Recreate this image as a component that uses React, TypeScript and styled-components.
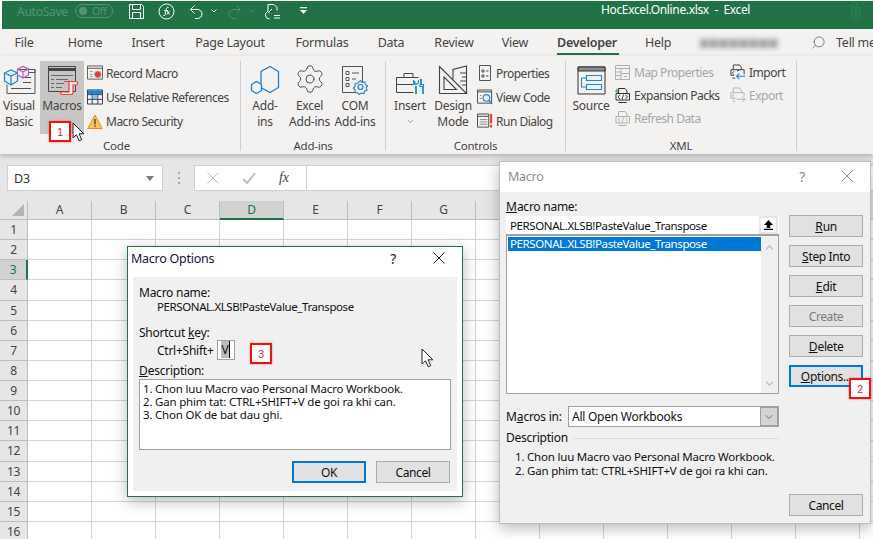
import React from 'react';
import styled, { createGlobalStyle } from 'styled-components';
import { ChevronDown, ChevronUp, Search, Settings } from 'lucide-react';

const FONT = `'Noto Sans', 'Open Sans', 'Liberation Sans', sans-serif`;
const GREEN = '#217346';

const Global = createGlobalStyle`
  html, body { margin: 0; padding: 0; background: #fff; }
  body { font-family: ${FONT}; font-size: 12px; letter-spacing: -0.25px; color: #333; }
  u { letter-spacing: 0; }
  * { box-sizing: border-box; }
`;

const Page = styled.div`
  position: relative;
  width: 873px;
  height: 539px;
  overflow: hidden;
  display: flex;
  flex-direction: column;
  background: #fff;
`;

/* title bar */
const TitleBar = styled.div`
  position: relative;
  flex: 0 0 27px;
  margin: 1px 0 0 2px;
  display: flex;
  align-items: center;
  background: ${GREEN};
  color: #fff;
  padding-bottom: 8px;
`;
const AutoSave = styled.span`
  margin-left: 15px;
  font-size: 12px;
  color: #56946f;
`;
const Toggle = styled.span`
  margin-left: 7px;
  width: 38px;
  height: 14px;
  border: 1px solid #56946f;
  border-radius: 7px;
  display: flex;
  align-items: center;
  gap: 5px;
  padding-left: 3px;
  font-size: 10.5px;
  color: #56946f;
  &::before {
    content: '';
    width: 8px;
    height: 8px;
    border-radius: 50%;
    background: #56946f;
  }
`;
const Qat = styled.span<{ $x: number }>`
  display: flex;
  margin-left: ${p => p.$x}px;
`;
const DocTitle = styled.span`
  position: absolute;
  left: 599px;
  top: 0;
  font-size: 12px;
  letter-spacing: -0.35px;
  white-space: pre;
`;

/* tabs */
const TabRow = styled.div`
  flex: 0 0 27px;
  display: flex;
  align-items: stretch;
  background: #f3f2f1;
`;
const Tab = styled.div<{ $w: number; $active?: boolean }>`
  position: relative;
  flex: none;
  width: ${p => p.$w}px;
  display: flex;
  align-items: center;
  justify-content: center;
  font-size: 12.5px;
  padding-bottom: 1px;
  color: #444;
  font-weight: ${p => (p.$active ? 600 : 400)};
  &::after {
    content: '';
    display: ${p => (p.$active ? 'block' : 'none')};
    position: absolute;
    left: 11px;
    right: 9px;
    bottom: 1px;
    height: 2px;
    background: ${GREEN};
  }
`;
const Blurred = styled.div`
  flex: none;
  width: 78px;
  height: 9px;
  margin: 10px 33px 0 12px;
  background: repeating-linear-gradient(90deg, #a2a2a2 0 7px, #c4c4c4 7px 10px);
  filter: blur(2.5px);
`;
const TellMe = styled.div`
  flex: none;
  display: flex;
  align-items: center;
  gap: 10px;
  padding-bottom: 1px;
  font-size: 12.5px;
  white-space: nowrap;
  color: #444;
`;

/* ribbon */
const Ribbon = styled.div`
  position: relative;
  z-index: 1;
  flex: 0 0 98px;
  display: flex;
  padding-top: 5px;
  background: #f3f2f1;
  box-shadow: 0 2px 5px rgba(0, 0, 0, 0.22);
`;
const Group = styled.div<{ $w: number; $pad: number }>`
  width: ${p => p.$w}px;
  height: 90px;
  padding-left: ${p => p.$pad}px;
  border-right: 1px solid #d0cfce;
  display: flex;
  flex-direction: column;
  justify-content: space-between;
  align-items: stretch;
`;
const GroupBody = styled.div`
  display: flex;
  height: 73px;
`;
const GroupLabel = styled.div<{ $shift?: number }>`
  text-align: center;
  height: 14px;
  line-height: 14px;
  font-size: 11.5px;
  color: #444;
  margin: 0 0 -2px ${p => -(p.$shift ?? 0)}px;
`;
const LargeBtn = styled.div<{ $w: number; $gap?: number; $hot?: boolean }>`
  width: ${p => p.$w}px;
  margin-right: ${p => p.$gap ?? 0}px;
  background: ${p => (p.$hot ? '#c8c6c4' : 'transparent')};
  text-align: center;
  line-height: 16px;
  color: #444;
  font-size: 12px;
  flex: none;
`;
const LargeIcon = styled.div`
  height: 37px;
  display: flex;
  align-items: flex-end;
  justify-content: center;
  padding-bottom: 3px;
`;
const SmallCol = styled.div<{ $w?: number; $step: number; $top: number }>`
  width: ${p => (p.$w ? `${p.$w}px` : 'auto')};
  flex: none;
  padding-top: ${p => p.$top}px;
  display: flex;
  flex-direction: column;
  & > div { height: ${p => p.$step}px; }
`;
const SmallBtn = styled.div<{ $off?: boolean }>`
  display: flex;
  align-items: center;
  gap: 3px;
  white-space: nowrap;
  font-size: 12px;
  letter-spacing: -0.5px;
  color: ${p => (p.$off ? '#a6a6a6' : '#444')};
`;
const IconSlot = styled.span`
  width: 16px;
  height: 17px;
  display: flex;
  align-items: center;
  justify-content: center;
  flex: none;
`;

/* formula bar */
const FormulaBar = styled.div`
  flex: 0 0 47px;
  background: #e6e6e6;
  display: flex;
  align-items: flex-start;
  padding: 11px 0 0 7px;
`;
const NameBox = styled.div`
  width: 156px;
  height: 26px;
  background: #fff;
  border: 1px solid #d0d0d0;
  display: flex;
  align-items: center;
  justify-content: space-between;
  padding: 0 8px 0 6px;
  font-size: 12.5px;
  color: #333;
  &::after {
    content: '';
    border: 4px solid transparent;
    border-top: 5px solid #7a7a7a;
    border-bottom: 0;
  }
`;
const Grip = styled.div`
  width: 2px;
  height: 12px;
  margin: 7px 14px 0 15px;
  background: repeating-linear-gradient(180deg, #a6a6a6 0 2px, transparent 2px 5px);
`;
const FormulaBox = styled.div`
  flex: 1;
  height: 26px;
  background: #fff;
  border: 1px solid #d0d0d0;
  border-right: 0;
  display: flex;
  align-items: center;
`;
const FxZone = styled.div`
  width: 112px;
  height: 100%;
  border-right: 1px solid #d0d0d0;
  display: flex;
  align-items: center;
  gap: 23px;
  padding-left: 12px;
`;
const FxText = styled.span`
  font-family: 'Liberation Serif', serif;
  font-style: italic;
  font-size: 14px;
  color: #444;
`;

/* sheet grid */
const Sheet = styled.div`
  flex: 1;
  display: grid;
  grid-template-columns: 28px repeat(14, 64px);
  grid-auto-rows: 20.13px;
  grid-template-rows: 19px;
  overflow: hidden;
`;
const Corner = styled.div`
  background: #e6e6e6;
  border-right: 1px solid #bdbdbd;
  border-bottom: 1px solid #bdbdbd;
  position: relative;
  &::after {
    content: '';
    position: absolute;
    right: 3px;
    bottom: 3px;
    border-style: solid;
    border-width: 0 0 12px 12px;
    border-color: transparent transparent #b4b4b4 transparent;
  }
`;
const ColHead = styled.div<{ $on: boolean }>`
  background: ${p => (p.$on ? '#d2d2d2' : '#e6e6e6')};
  color: ${p => (p.$on ? GREEN : '#444')};
  border-right: 1px solid #bdbdbd;
  border-bottom: ${p => (p.$on ? `2px solid ${GREEN}` : '1px solid #bdbdbd')};
  text-align: center;
  line-height: 18px;
  font-size: 12px;
`;
const RowHead = styled.div<{ $on: boolean }>`
  background: ${p => (p.$on ? '#d2d2d2' : '#e6e6e6')};
  color: ${p => (p.$on ? GREEN : '#444')};
  border-right: ${p => (p.$on ? `2px solid ${GREEN}` : '1px solid #bdbdbd')};
  border-bottom: 1px solid #bdbdbd;
  text-align: center;
  line-height: 20px;
  font-size: 12px;
`;
const Cell = styled.div`
  border-right: 1px solid #d4d4d4;
  border-bottom: 1px solid #d4d4d4;
`;

/* dialogs: windows over the sheet */
const Win = styled.div<{ $x: number; $y: number; $w: number; $h: number; $border: string }>`
  position: absolute;
  z-index: 3;
  left: ${p => p.$x}px;
  top: ${p => p.$y}px;
  width: ${p => p.$w}px;
  height: ${p => p.$h}px;
  border: 1px solid ${p => p.$border};
  background: #fff;
  display: flex;
  flex-direction: column;
  color: #111;
  box-shadow: 0 4px 14px rgba(0, 0, 0, 0.28);
`;
const WinHead = styled.div<{ $h: number; $lift: number; $dim?: boolean }>`
  flex: 0 0 ${p => p.$h}px;
  display: flex;
  align-items: center;
  padding: 0 0 ${p => p.$lift}px 3px;
  font-size: 12.5px;
  color: ${p => (p.$dim ? '#8c8c8c' : '#1a1040')};
`;
const WinName = styled.span<{ $pad: number }>`
  flex: 1;
  padding-left: ${p => p.$pad}px;
`;
const HelpMark = styled.span<{ $gap: number }>`
  margin-right: ${p => p.$gap}px;
  font-size: 14px;
`;
const CloseSlot = styled.span<{ $gap: number }>`
  display: flex;
  margin-right: ${p => p.$gap}px;
`;

const OptBody = styled.div`
  flex: 1;
  margin: 0 5px 5px;
  padding: 8px 6px 8px;
  background: #f0f0f0;
  font-size: 12px;
  display: flex;
  flex-direction: column;
`;
const Label = styled.div<{ $top?: number }>`
  margin-top: ${p => p.$top ?? 0}px;
  line-height: 16px;
  white-space: nowrap;
`;
const MacroText = styled.span`
  font-size: 11.5px;
  letter-spacing: -0.4px;
  white-space: nowrap;
`;
const Indented = styled.div<{ $top?: number }>`
  margin: ${p => p.$top ?? 0}px 0 0 18px;
  line-height: 16px;
  white-space: nowrap;
`;
const KeyRow = styled.div`
  display: flex;
  align-items: center;
  margin: -1px 0 0 18px;
  height: 20px;
`;
const KeyInput = styled.div`
  width: 18px;
  height: 20px;
  margin-left: 3px;
  background: #fff;
  border: 1px solid #a0a0a0;
  padding: 1px 0 0 3px;
  line-height: 16px;
  & > span { background: #bdbdbd; padding: 0 1px 0 1px; border-right: 1px solid #000; }
`;
const DescBox = styled.div`
  height: 71px;
  background: #fff;
  border: 1px solid #a0a0a0;
  padding: 2px 3px;
  line-height: 13px;
  font-size: 11.5px;
  letter-spacing: -0.2px;
  white-space: pre;
`;
const ButtonRow = styled.div`
  display: flex;
  justify-content: flex-end;
  gap: 10px;
  margin: 11px 1px 0 0;
`;
const Btn = styled.div<{ $focus?: boolean; $off?: boolean }>`
  width: 74px;
  height: 22px;
  flex: none;
  display: flex;
  align-items: center;
  justify-content: center;
  background: #e1e1e1;
  border: ${p => (p.$focus ? '2px solid #0078d7' : '1px solid #adadad')};
  color: ${p => (p.$off ? '#7a7a7a' : '#111')};
  font-size: 12px;
  letter-spacing: -0.4px;
`;

const MacroBody = styled.div`
  flex: 1;
  background: #f0f0f0;
  display: grid;
  grid-template-columns: 273px 74px;
  column-gap: 10px;
  padding: 7px 0 7px 6px;
  font-size: 12px;
`;
const LeftCol = styled.div`
  display: flex;
  flex-direction: column;
`;
const RightCol = styled.div`
  display: flex;
  flex-direction: column;
  gap: 8px;
  padding-top: 16px;
  & > :last-child { margin-top: auto; }
`;
const NameInput = styled.div`
  margin-top: 1px;
  height: 19px;
  background: #fff;
  border-bottom: 1px solid #a0a0a0;
  display: flex;
  align-items: center;
  justify-content: space-between;
  padding: 0 1px 0 4px;
`;
const UpBtn = styled.div`
  width: 19px;
  height: 18px;
  background: #fff;
  border: 2px solid #e6e6e6;
  display: flex;
  align-items: center;
  justify-content: center;
`;
const ListBox = styled.div`
  height: 159px;
  background: #fff;
  border: 1px solid #a0a0a0;
  display: flex;
  padding: 1px 0 0 1px;
`;
const ListItems = styled.div`
  flex: 1;
`;
const ListItem = styled.div`
  height: 14px;
  line-height: 14px;
  padding-left: 2px;
  background: #0078d7;
  color: #fff;
`;
const ScrollTrack = styled.div`
  width: 17px;
  margin-top: -1px;
  background: #f0f0f0;
  display: flex;
  flex-direction: column;
  justify-content: space-between;
  align-items: center;
  padding: 5px 0 3px;
  color: #bcbcbc;
`;
const SelectRow = styled.div`
  display: flex;
  align-items: center;
  margin-top: 12px;
  height: 21px;
`;
const SelectLabel = styled.span`
  width: 62px;
`;
const SelectBox = styled.div`
  flex: 1;
  height: 21px;
  background: #fff;
  border: 1px solid #a0a0a0;
  display: flex;
  align-items: center;
  justify-content: space-between;
  padding-left: 3px;
`;
const SelectArrow = styled.div`
  width: 18px;
  height: 100%;
  background: #d4d4d4;
  border: 1px solid #a0a0a0;
  display: flex;
  align-items: center;
  justify-content: center;
  color: #555;
`;
const DescHead = styled.div`
  display: flex;
  align-items: center;
  gap: 5px;
  margin-top: 4px;
  line-height: 14px;
  &::after {
    content: '';
    flex: 1;
    height: 1px;
    background: #dcdcdc;
  }
`;
const DescText = styled.div`
  margin: 5px 0 0 9px;
  line-height: 14px;
  font-size: 11.5px;
  letter-spacing: -0.2px;
  white-space: pre;
`;

/* callouts and pointers over everything */
const Badge = styled.div<{ $x: number; $y: number }>`
  position: absolute;
  z-index: 5;
  left: ${p => p.$x}px;
  top: ${p => p.$y}px;
  width: 22px;
  height: 21px;
  background: #fff;
  border: 2px solid #f01010;
  box-shadow: 0 0 2px rgba(240, 16, 16, 0.5);
  color: #e02020;
  font-family: 'Liberation Sans', sans-serif;
  font-size: 10.5px;
  display: flex;
  align-items: center;
  justify-content: center;
`;
const Pointer = styled.svg<{ $x: number; $y: number }>`
  position: absolute;
  z-index: 6;
  left: ${p => p.$x}px;
  top: ${p => p.$y}px;
`;

const D = '#444';
const B = '#1e88d2';

const Arrow = ({ x, y }: { x: number; y: number }) => (
  <Pointer $x={x} $y={y} width="14" height="20" viewBox="0 0 14 20">
    <path d="M1 1v15l3.5-3.2 2.6 6 2.6-1.1-2.6-5.9h4.8z" fill="#fff" stroke="#222" strokeWidth="1" />
  </Pointer>
);

const Ico = ({ w, h, children }: { w: number; h: number; children: React.ReactNode }) => (
  <svg width={w} height={h} viewBox={`0 0 ${w} ${h}`} fill="none" stroke={D} strokeWidth="1">{children}</svg>
);

const SaveIcon = () => (
  <Ico w={17} h={17}>
    <path d="M1.5 1.5h12l2 2v12h-14z M4.5 1.5v5h8v-5 M4.5 15.5v-6h8v6" stroke="#fff" />
  </Ico>
);
const FxIcon = () => (
  <Ico w={17} h={17}>
    <circle cx="8.5" cy="8.5" r="7.5" stroke="#fff" />
    <path d="M10.5 4.5c-1.5-.5-2 .3-2.3 2l-.9 4.5c-.3 1.5-1 2-2 1.5 M6 7.5h4 M9 8l2.5 3.5 M11.5 8L9 11.5" stroke="#fff" />
  </Ico>
);
const UndoIcon = ({ c, flip }: { c: string; flip?: boolean }) => (
  <svg width="15" height="15" viewBox="0 0 15 15" fill="none" stroke={c} style={flip ? { transform: 'scaleX(-1)' } : undefined}>
    <path d="M5.5 1.5L1.5 5.5l4 4 M1.5 5.5h7a4.5 4.5 0 0 1 0 9H6" />
  </svg>
);
const MiniChevron = ({ c }: { c: string }) => (
  <svg width="6" height="4" viewBox="0 0 6 4" fill="none" stroke={c}><path d="M.5.500L3 3 5.500.500" /></svg>
);
const FormIcon = () => (
  <Ico w={17} h={17}>
    <path d="M4 8V1.5h6l3 3v3 M8 6l-3 3 M3.5 8.5A4 4 0 0 0 5.5 16 M2 10l1.500-1.500 2 1.500 M10 12.500h6 M10 15h6" stroke="#fff" />
  </Ico>
);
const CustomizeIcon = () => (
  <svg width="7" height="8" viewBox="0 0 7 8"><path d="M0 0h7v1.300H0z M0 3h7L3.500 7z" fill="#fff" /></svg>
);
const Clip = () => (
  <svg width="14" height="20" viewBox="0 0 14 20" fill="none" stroke="#2c8055" strokeWidth="1.300">
    <path d="M11 5v9a4 4 0 0 1-8 0V4a2.600 2.600 0 0 1 5.200 0v9a1 1 0 0 1-2 0V5" />
  </svg>
);

const VisualBasicIcon = () => (
  <Ico w={33} h={30}>
    <path d="M16 4.500h16v24H4v-9 M21 4.500h11v3H21 M8 23.500h20 M8 20.500h0 M20 12.500h8 M20 17.500h8" stroke="#555" />
    <path d="M1.500 8L8 5l6.500 3v8L8 20l-6.500-4z M1.500 8L8 11l6.500-3 M8 11v9" stroke={B} strokeWidth="1.300" fill="#f3f2f1" />
    <path d="M14.500 4L20 1.500 25.500 4v6L20 13l-5.500-3z M14.500 4L20 7l5.500-3 M20 7v6" stroke="#b45fc7" strokeWidth="1.200" fill="#f6eef8" />
  </Ico>
);
const MacrosIcon = () => (
  <Ico w={31} h={30}>
    <path d="M1.500 1.500h27v25h-27z" stroke="#444" />
    <path d="M1.500 4.500h27" stroke="#444" strokeWidth="3" />
    <path d="M4 10.500h22 M4 14.500h3 M9 14.500h12 M4 18.500h3 M9 18.500h8 M4 22.500h3 M9 22.500h6" stroke="#666" />
    <path d="M17 16.500h12c1 0 1.500 1 1.500 2s-1 1.500-2 1.500H26v8c0 1-1 1.500-2 1.500H15c-1.500 0-1.500-2-1-2.500h8v-9c0-1 0-2-1-2" stroke="#e8413c" fill="#fbe9e8" strokeWidth="1.200" />
  </Ico>
);
const RecordIcon = () => (
  <Ico w={17} h={16}>
    <path d="M.5.500h16v14H.5z M.5 3h16" stroke="#555" />
    <path d="M3 6.500h3 M3 9.500h3 M3 12h3" stroke="#888" />
    <circle cx="11.500" cy="9.500" r="3.500" fill="#e23b36" stroke="#aaa" />
  </Ico>
);
const RelativeIcon = () => (
  <Ico w={17} h={16}>
    <path d="M.5.500h16v15H.5z M.5 5.500h16 M.5 10.500h16 M5.500.500v15 M11.500.500v15" stroke="#334" />
    <path d="M1 1h15v4H1z" fill="#1e88d2" stroke="none" />
    <path d="M6 6h5v4H6z" fill="#7ec0ee" stroke="none" />
  </Ico>
);
const WarnIcon = () => (
  <Ico w={16} h={15}>
    <path d="M8 1l7.200 13.500H.8z" fill="#fbc25b" stroke="#e08b25" />
    <path d="M8 5v5.500 M8 11.500v1.500" stroke="#444" strokeWidth="1.400" />
  </Ico>
);
const AddinsIcon = () => (
  <Ico w={30} h={30}>
    <path d="M20 1.500l8.500 5v16l-8.500 5-9-5v-16z" stroke="#1f7fc9" strokeWidth="1.300" />
    <path d="M6.500 16.500l5 3v6l-5 3-5-3v-6z" stroke="#1f7fc9" strokeWidth="1.300" fill="#f3f2f1" />
  </Ico>
);
const ComIcon = () => (
  <Ico w={28} h={30}>
    <path d="M1.500 1.500h20v26h-20z" stroke="#555" />
    <path d="M5 6.500h3v3H5z M5 12.500h3v3H5z M5 18.500h3v3H5z M11 8h7 M11 14h4" stroke="#555" />
    <path d="M19.500 15.500l1.500 2 2.800-.5.500 2.500 2.300 1.500-1.500 1.900 1 2.300-2.600 1-.6 2.300-2.600-.5-2 1.500-1.800-1.700-2.600-.2.300-2.600-1.800-2 1.800-1.800-.1-2.500 2.600-.2z" stroke="#1f7fc9" fill="#f3f2f1" strokeWidth="1.100" />
    <circle cx="19.500" cy="22" r="2.500" stroke="#1f7fc9" strokeWidth="1.200" />
  </Ico>
);
const ToolboxIcon = () => (
  <Ico w={31} h={24}>
    <path d="M1.500 6.500h22 M1.500 6.500v15h17 M9 6.500V2.500h9v4 M1.500 13.500h17" stroke="#444" />
    <path d="M19.500 10v3.500M26 8v5M21 15v8M28 15v8" stroke={B} strokeWidth="1.800" />
    <path d="M18.500 9v3l2.500 1.500 2.500-1.500V9 M25 13.500h3.500v2H25z" stroke={B} strokeWidth="1.200" />
  </Ico>
);
const DesignIcon = () => (
  <Ico w={30} h={30}>
    <path d="M1.500 1.500l27 27h-27z M6 12l12.500 12.500H6z" stroke="#444" strokeWidth="1.100" />
    <path d="M15 14V4.500L28.500 1v27" stroke="#444" strokeWidth="1.100" />
    <path d="M22 8h6 M24 12h4 M22 16h6 M24 20h4" stroke="#444" />
  </Ico>
);
const PropertiesIcon = () => (
  <Ico w={13} h={16}>
    <path d="M.5.500h11v15H.5z M3 5h2v2H3z M3 10h2v2H3z M7 6h2.500 M7 11h2.500" stroke="#555" />
  </Ico>
);
const ViewCodeIcon = () => (
  <Ico w={17} h={17}>
    <path d="M.5.500h15v14H.5z M.5 2.500h15" stroke="#444" />
    <path d="M3 6.500h2 M3 9.500h2" stroke="#888" />
    <circle cx="10" cy="9" r="3.500" stroke={B} strokeWidth="1.200" />
    <path d="M12.500 11.500l3.500 4" stroke={B} strokeWidth="1.500" />
  </Ico>
);
const RunDialogIcon = () => (
  <Ico w={17} h={16}>
    <path d="M.5.500h12v14H.5z M.5 3h12" stroke="#444" />
    <path d="M3 6.500h8 M3 9h8 M3 11.500h8" stroke="#888" />
    <path d="M15 .5v10 M15 12v3" stroke="#e6332a" strokeWidth="2" />
  </Ico>
);
const SourceIcon = () => (
  <Ico w={29} h={29}>
    <path d="M1 1h27v27H1z" stroke="#333" />
    <path d="M1 1h27v4H1z" fill="#8f8f8f" stroke="#333" />
    <path d="M9.500 9.500h15v5h-15z M9.500 18.500h15v5h-15z M4.500 12h5 M4.500 12v9h5" stroke={B} strokeWidth="1.100" />
  </Ico>
);
const MapIcon = () => (
  <Ico w={16} h={16}>
    <path d="M.5.500h14v14H.5z M.5 3.500h14 M6 3.500v11 M6 8.500h8.500 M.5 7h5.500 M.5 10.500h5.500 M9 11.500h3" stroke="#b0b0b0" />
  </Ico>
);
const XmlDoc = ({ c, extra }: { c: string; extra?: React.ReactNode }) => (
  <Ico w={16} h={16}>
    <path d="M3.500 5V.5H10l2 2.500v2 M1 5.500h13.500v6.500H1z M3.500 14.500h8" stroke={c} />
    <path d="M5 7l-2 2 2 2 M10.500 7l2 2-2 2 M8.500 6.500l-1.500 5" stroke={c} strokeWidth=".9" />
    {extra}
  </Ico>
);
const ImportIcon = () => (
  <Ico w={17} h={17}>
    <path d="M3.500 5V.5H10l2 2.500v2 M1 5.500h14v5 M1 5.500v6h3 M2.500 14.500h3" stroke="#333" />
    <path d="M4.500 7l-2 2 2 2 M7.500 7L10 6" stroke="#333" strokeWidth=".9" />
    <path d="M16 12.500H7 M10 9.500l-3 3 3 3" stroke={B} strokeWidth="1.200" />
  </Ico>
);
const ExportIcon = () => (
  <Ico w={17} h={17}>
    <path d="M3.500 5V.5H10l2 2.500v2 M1 5.500h14v4 M1 5.500v6h5 M2.500 14.500h3 M4.500 7l-2 2 2 2 M7 12.500h9 M13 9.500l3 3-3 3" stroke="#b0b0b0" />
  </Ico>
);
const CloseGlyph = ({ c }: { c: string }) => (
  <svg width="12" height="12" viewBox="0 0 12 12" stroke={c}><path d="M.5.500l11 11 M11.500.500l-11 11" /></svg>
);
const UpArrow = () => (
  <svg width="9" height="10" viewBox="0 0 9 10" fill="#000"><path d="M4.500 0L9 5H6.300v3H2.700V5H0z M0 8.800h9V10H0z" /></svg>
);

const COLS = 'ABCDEFGHIJKLMN'.split('');
const ROWS = Array.from({ length: 16 }, (_, i) => i + 1);
const TABS: [string, number][] = [['File', 48], ['Home', 74], ['Insert', 52], ['Page Layout', 112], ['Formulas', 72], ['Data', 66], ['Review', 60], ['View', 62], ['Developer', 82], ['Help', 60]];
const MACRO = 'PERSONAL.XLSB!PasteValue_Transpose';
const LINE1 = '1. Chon luu Macro vao Personal Macro Workbook.';
const LINE2 = '2. Gan phim tat: CTRL+SHIFT+V de goi ra khi can.';

const App = () => (
  <Page>
    <Global />
    <TitleBar>
      <AutoSave>AutoSave</AutoSave>
      <Toggle>Off</Toggle>
      <Qat $x={15}><SaveIcon /></Qat>
      <Qat $x={13}><FxIcon /></Qat>
      <Qat $x={14}><UndoIcon c="#fff" /></Qat>
      <Qat $x={7}><MiniChevron c="#fff" /></Qat>
      <Qat $x={10}><UndoIcon c="#4d9069" flip /></Qat>
      <Qat $x={7}><MiniChevron c="#4d9069" /></Qat>
      <Qat $x={9}><FormIcon /></Qat>
      <Qat $x={19}><CustomizeIcon /></Qat>
      <DocTitle>HocExcel.Online.xlsx  -  Excel</DocTitle>
      <Qat $x={542}><Clip /></Qat>
    </TitleBar>
    <TabRow>
      {TABS.map(([name, w]) => <Tab key={name} $w={w} $active={name === 'Developer'}>{name}</Tab>)}
      <Blurred />
      <TellMe><Search size={15} strokeWidth={1} color="#444" style={{ transform: 'scaleX(-1)' }} />Tell me</TellMe>
    </TabRow>
    <Ribbon>
      <Group $w={241} $pad={1}>
        <GroupBody>
          <LargeBtn $w={36} $gap={3}><LargeIcon><VisualBasicIcon /></LargeIcon>Visual<br />Basic</LargeBtn>
          <LargeBtn $w={44} $gap={3} $hot><LargeIcon><MacrosIcon /></LargeIcon>Macros</LargeBtn>
          <SmallCol $step={24} $top={0}>
            <SmallBtn><IconSlot><RecordIcon /></IconSlot>Record Macro</SmallBtn>
            <SmallBtn><IconSlot><RelativeIcon /></IconSlot>Use Relative References</SmallBtn>
            <SmallBtn><IconSlot><WarnIcon /></IconSlot>Macro Security</SmallBtn>
          </SmallCol>
        </GroupBody>
        <GroupLabel $shift={8}>Code</GroupLabel>
      </Group>
      <Group $w={145} $pad={2}>
        <GroupBody>
          <LargeBtn $w={44}><LargeIcon><AddinsIcon /></LargeIcon>Add-<br />ins</LargeBtn>
          <LargeBtn $w={45}><LargeIcon><Settings size={32} strokeWidth={0.7} color="#444" /></LargeIcon>Excel<br />Add-ins</LargeBtn>
          <LargeBtn $w={46}><LargeIcon><ComIcon /></LargeIcon>COM<br />Add-ins</LargeBtn>
        </GroupBody>
        <GroupLabel $shift={2}>Add-ins</GroupLabel>
      </Group>
      <Group $w={180} $pad={4}>
        <GroupBody>
          <LargeBtn $w={40} $gap={3}><LargeIcon><ToolboxIcon /></LargeIcon>Insert<br /><ChevronDown size={9} strokeWidth={1.5} color="#555" /></LargeBtn>
          <LargeBtn $w={40} $gap={4}><LargeIcon><DesignIcon /></LargeIcon>Design<br />Mode</LargeBtn>
          <SmallCol $step={24} $top={0}>
            <SmallBtn><IconSlot><PropertiesIcon /></IconSlot>Properties</SmallBtn>
            <SmallBtn><IconSlot><ViewCodeIcon /></IconSlot>View Code</SmallBtn>
            <SmallBtn><IconSlot><RunDialogIcon /></IconSlot>Run Dialog</SmallBtn>
          </SmallCol>
        </GroupBody>
        <GroupLabel $shift={4}>Controls</GroupLabel>
      </Group>
      <Group $w={231} $pad={5}>
        <GroupBody>
          <LargeBtn $w={40} $gap={4}><LargeIcon><SourceIcon /></LargeIcon>Source</LargeBtn>
          <SmallCol $w={115} $step={23} $top={0}>
            <SmallBtn $off><IconSlot><MapIcon /></IconSlot>Map Properties</SmallBtn>
            <SmallBtn><IconSlot><XmlDoc c="#333" extra={<path d="M2 .5v5 M-.5 3h5" stroke="#2e9e4f" />} /></IconSlot>Expansion Packs</SmallBtn>
            <SmallBtn $off><IconSlot><XmlDoc c="#b0b0b0" /></IconSlot>Refresh Data</SmallBtn>
          </SmallCol>
          <SmallCol $step={23} $top={0}>
            <SmallBtn><IconSlot><ImportIcon /></IconSlot>Import</SmallBtn>
            <SmallBtn $off><IconSlot><ExportIcon /></IconSlot>Export</SmallBtn>
          </SmallCol>
        </GroupBody>
        <GroupLabel $shift={5}>XML</GroupLabel>
      </Group>
    </Ribbon>
    <FormulaBar>
      <NameBox>D3</NameBox>
      <Grip />
      <FormulaBox>
        <FxZone>
          <CloseGlyph c="#bdbdbd" />
          <svg width="14" height="12" viewBox="0 0 14 12" fill="none" stroke="#bdbdbd" strokeWidth="2"><path d="M1 7l4 4 8-10" /></svg>
          <FxText>fx</FxText>
        </FxZone>
      </FormulaBox>
    </FormulaBar>
    <Sheet>
      <Corner />
      {COLS.map(c => <ColHead key={c} $on={c === 'D'}>{c === 'N' ? '' : c}</ColHead>)}
      {ROWS.map(r => (
        <React.Fragment key={r}>
          <RowHead $on={r === 3}>{r}</RowHead>
          {COLS.map(c => <Cell key={c} />)}
        </React.Fragment>
      ))}
    </Sheet>

    <Win $x={127} $y={246} $w={336} $h={251} $border="#217346">
      <WinHead $h={30} $lift={8}>
        <WinName $pad={0}>Macro Options</WinName>
        <HelpMark $gap={37}>?</HelpMark>
        <CloseSlot $gap={17}><CloseGlyph c="#222" /></CloseSlot>
      </WinHead>
      <OptBody>
        <Label>Macro name:</Label>
        <Indented $top={-2}><MacroText>{MACRO}</MacroText></Indented>
        <Label $top={10}>Shortcut <u>k</u>ey:</Label>
        <KeyRow>Ctrl+Shift+<KeyInput><span>V</span></KeyInput></KeyRow>
        <Label $top={3}><u>D</u>escription:</Label>
        <DescBox>{`${LINE1}\n${LINE2}\n3. Chon OK de bat dau ghi.`}</DescBox>
        <ButtonRow>
          <Btn $focus>OK</Btn>
          <Btn>Cancel</Btn>
        </ButtonRow>
      </OptBody>
    </Win>

    <Win $x={499} $y={161} $w={372} $h={363} $border="#bdbdbd">
      <WinHead $h={30} $lift={2} $dim>
        <WinName $pad={5}>Macro</WinName>
        <HelpMark $gap={36}>?</HelpMark>
        <CloseSlot $gap={17}><CloseGlyph c="#8c8c8c" /></CloseSlot>
      </WinHead>
      <MacroBody>
        <LeftCol>
          <Label><u>M</u>acro name:</Label>
          <NameInput><MacroText>{MACRO}</MacroText><UpBtn><UpArrow /></UpBtn></NameInput>
          <ListBox>
            <ListItems><ListItem><MacroText>{MACRO}</MacroText></ListItem></ListItems>
            <ScrollTrack><ChevronUp size={13} strokeWidth={2.5} /><ChevronDown size={13} strokeWidth={2.5} /></ScrollTrack>
          </ListBox>
          <SelectRow>
            <SelectLabel>M<u>a</u>cros in:</SelectLabel>
            <SelectBox>All Open Workbooks<SelectArrow><ChevronDown size={12} strokeWidth={1.5} /></SelectArrow></SelectBox>
          </SelectRow>
          <DescHead>Description</DescHead>
          <DescText>{`${LINE1}\n${LINE2}`}</DescText>
        </LeftCol>
        <RightCol>
          <Btn><u>R</u>un</Btn>
          <Btn><u>S</u>tep Into</Btn>
          <Btn><u>E</u>dit</Btn>
          <Btn $off>Create</Btn>
          <Btn><u>D</u>elete</Btn>
          <Btn $focus><u>O</u>ptions...</Btn>
          <Btn>Cancel</Btn>
        </RightCol>
      </MacroBody>
    </Win>

    <Badge $x={49} $y={121}>1</Badge>
    <Badge $x={849} $y={378}>2</Badge>
    <Badge $x={250} $y={343}>3</Badge>
    <Arrow x={72} y={122} />
    <Arrow x={421} y={348} />
  </Page>
);

export default App;
